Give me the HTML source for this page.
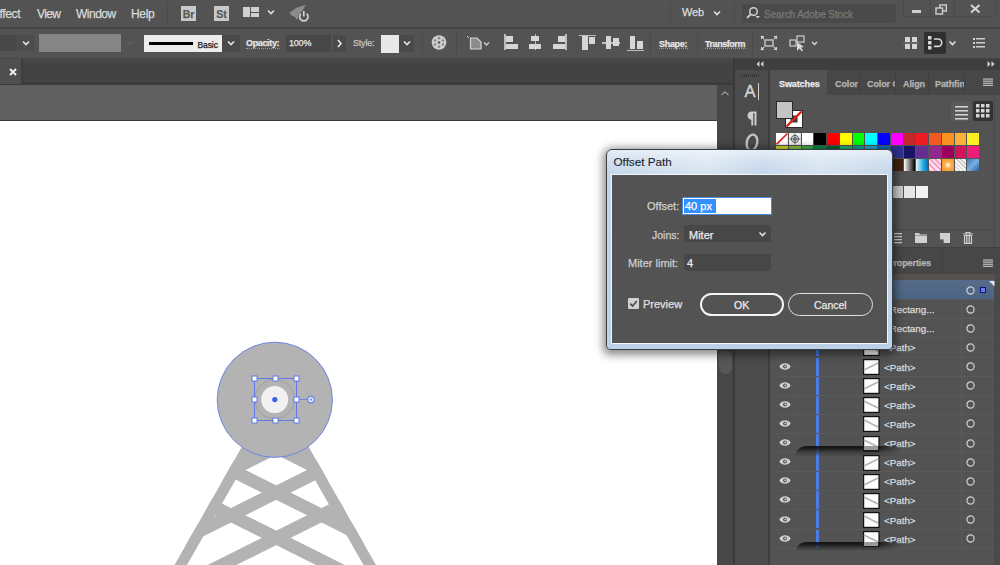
<!DOCTYPE html>
<html><head><meta charset="utf-8">
<style>
*{box-sizing:border-box;margin:0;padding:0}
html,body{width:1000px;height:565px;overflow:hidden;background:#535353;font-family:"Liberation Sans",sans-serif;color:#d6d6d6}
body{position:relative}
.a{position:absolute}
.t{position:absolute;white-space:nowrap;font-size:12px;line-height:14px;-webkit-text-stroke:0.25px currentColor}
svg{position:absolute;overflow:visible}
</style></head><body>
<!-- MENU BAR -->
<div class="a" style="left:0;top:0;width:1000px;height:27px;background:#535353"></div>
<div class="a" style="left:0;top:27px;width:1000px;height:2px;background:#434343"></div>
<div class="t" style="left:-8px;top:7px;font-size:12px;letter-spacing:-0.4px;color:#dadada">Effect</div>
<div class="t" style="left:37px;top:7px;font-size:12px;letter-spacing:-0.6px;color:#dadada">View</div>
<div class="t" style="left:76px;top:7px;font-size:12px;letter-spacing:-0.5px;color:#dadada">Window</div>
<div class="t" style="left:131px;top:7px;font-size:12px;letter-spacing:-0.3px;color:#dadada">Help</div>
<div class="a" style="left:167px;top:4px;width:1px;height:19px;background:#4a4a4a"></div>
<div class="a" style="left:181px;top:6px;width:15px;height:15px;background:#c9c9c9"></div>
<div class="t" style="left:182px;top:7px;width:13px;text-align:center;font-size:10.5px;font-weight:bold;color:#5a5a5a">Br</div>
<div class="a" style="left:214px;top:6px;width:15px;height:15px;background:#c9c9c9"></div>
<div class="t" style="left:215px;top:7px;width:13px;text-align:center;font-size:10.5px;font-weight:bold;color:#5a5a5a">St</div>
<div class="a" style="left:243px;top:7px;width:7px;height:10px;background:#d0d0d0"></div>
<div class="a" style="left:251px;top:7px;width:8px;height:4.5px;background:#d0d0d0"></div>
<div class="a" style="left:251px;top:12.5px;width:8px;height:4.5px;background:#d0d0d0"></div>
<svg style="left:267px;top:9px" width="8" height="6"><path d="M1 1.5 L4 4.5 L7 1.5" fill="none" stroke="#e0e0e0" stroke-width="1.6"/></svg>
<svg style="left:288px;top:2px" width="24" height="22"><path d="M1.5 10.5 L9 5.5 L17.5 3 L15 8 L11 13 L9 18 L7 15 L3 13 Z" fill="#8c8c8c"/><circle cx="15.8" cy="14.7" r="5.6" fill="#535353"/><path d="M13 11.6 A4.2 4.2 0 1 0 18.6 11.6" fill="none" stroke="#d0d0d0" stroke-width="1.7"/><path d="M15.8 9 V14.5" stroke="#d0d0d0" stroke-width="1.7"/></svg>
<!-- right of menu -->
<div class="a" style="left:670px;top:3px;width:1px;height:21px;background:#4a4a4a"></div>
<div class="t" style="left:682px;top:5px;font-size:11px;letter-spacing:-0.2px;color:#dcdcdc">Web</div>
<svg style="left:712.5px;top:10px" width="8" height="6"><path d="M1 1.5 L4 4.5 L7 1.5" fill="none" stroke="#e0e0e0" stroke-width="1.6"/></svg>
<div class="a" style="left:734px;top:3px;width:1px;height:21px;background:#4a4a4a"></div>
<div class="a" style="left:742px;top:4px;width:154px;height:19px;background:#4a4a4a;border-radius:2px"></div>
<svg style="left:745px;top:6px" width="16" height="14"><circle cx="8.5" cy="5.5" r="3.8" fill="none" stroke="#d0d0d0" stroke-width="1.5"/><path d="M5.8 8.2 L2 12" stroke="#d0d0d0" stroke-width="1.8"/><path d="M10.5 10 L15 10 L12.75 12.5Z" fill="#d0d0d0"/></svg>
<div class="t" style="left:764px;top:7.5px;font-size:10px;letter-spacing:-0.1px;color:#7a7a7a">Search Adobe Stock</div>
<div class="a" style="left:903px;top:-1px;width:93px;height:17.5px;border:1px solid #4b4b4b"></div>
<div class="a" style="left:929.5px;top:0;width:1px;height:16px;background:#4b4b4b"></div>
<div class="a" style="left:954px;top:0;width:1px;height:16px;background:#4b4b4b"></div>
<div class="a" style="left:912px;top:10px;width:9px;height:3px;background:#d0d0d0"></div>
<svg style="left:935px;top:4px" width="14" height="12"><rect x="4.8" y="1" width="6.5" height="6" fill="none" stroke="#d0d0d0" stroke-width="1.4"/><rect x="1" y="4" width="6.5" height="6" fill="#535353" stroke="#d0d0d0" stroke-width="1.4"/></svg>
<svg style="left:969px;top:3.5px" width="13" height="10"><path d="M2 1 L10.5 8.5 M10.5 1 L2 8.5" stroke="#d4d4d4" stroke-width="2"/></svg>
<!-- CONTROL BAR -->
<div class="a" style="left:0;top:29px;width:1000px;height:29px;background:#535353"></div>
<div class="a" style="left:0;top:35px;width:17px;height:16px;background:#474747"></div>
<div class="a" style="left:18px;top:35px;width:16px;height:16px;background:#4c4c4c"></div>
<svg style="left:22px;top:40px" width="8" height="6"><path d="M1 1.5 L4 4.5 L7 1.5" fill="none" stroke="#e6e6e6" stroke-width="1.6"/></svg>
<div class="a" style="left:39px;top:34px;width:82px;height:18px;background:#858585"></div>
<svg style="left:126px;top:40px" width="8" height="6"><path d="M1 1.5 L4 4.5 L7 1.5" fill="none" stroke="#666" stroke-width="1.4"/></svg>
<div class="a" style="left:144px;top:35px;width:78px;height:17px;background:#ececec"></div>
<div class="a" style="left:149px;top:42px;width:44px;height:2.5px;background:#000"></div>
<div class="t" style="left:197.5px;top:38px;font-size:8.5px;letter-spacing:-0.1px;color:#1a1a1a">Basic</div>
<div class="a" style="left:222px;top:35px;width:18px;height:17px;background:#4a4a4a"></div>
<svg style="left:227px;top:40px" width="8" height="6"><path d="M1 1.5 L4 4.5 L7 1.5" fill="none" stroke="#e6e6e6" stroke-width="1.6"/></svg>
<div class="t" style="left:246px;top:36px;font-size:9px;font-weight:bold;letter-spacing:-0.35px;color:#e4e4e4">Opacity:</div>
<div class="a" style="left:246px;top:47.5px;width:34px;height:1px;border-top:1px dotted #9a9a9a"></div>
<div class="a" style="left:286px;top:35px;width:45px;height:17px;background:#474747"></div>
<div class="t" style="left:289px;top:36px;font-size:9px;letter-spacing:-0.2px;color:#e6e6e6">100%</div>
<div class="a" style="left:333px;top:35px;width:13px;height:17px;background:#4a4a4a"></div>
<svg style="left:336px;top:39px" width="7" height="9"><path d="M2 1 L5 4.5 L2 8" fill="none" stroke="#e6e6e6" stroke-width="1.6"/></svg>
<div class="t" style="left:353px;top:36px;font-size:9px;letter-spacing:-0.2px;color:#c4c4c4">Style:</div>
<div class="a" style="left:381px;top:34.5px;width:18px;height:18px;background:#e8e8e8"></div>
<div class="a" style="left:399px;top:35px;width:15px;height:17px;background:#4a4a4a"></div>
<svg style="left:403px;top:40px" width="8" height="6"><path d="M1 1.5 L4 4.5 L7 1.5" fill="none" stroke="#e6e6e6" stroke-width="1.6"/></svg>
<div class="a" style="left:422px;top:31px;width:1px;height:24px;background:#4b4b4b"></div>
<svg style="left:430px;top:34px" width="18" height="18"><circle cx="9" cy="8.5" r="7.3" fill="#d0d0d0"/><circle cx="9" cy="8.5" r="1.3" fill="#555"/><g fill="#8a8a8a"><circle cx="9" cy="4.2" r="1.4"/><circle cx="9" cy="12.8" r="1.4"/><circle cx="5" cy="6.5" r="1.3"/><circle cx="13" cy="6.5" r="1.3"/><circle cx="5" cy="10.5" r="1.3"/><circle cx="13" cy="10.5" r="1.3"/></g></svg>
<div class="a" style="left:456px;top:31px;width:1px;height:24px;background:#4b4b4b"></div>
<svg style="left:466px;top:34px" width="24" height="18"><path d="M4.5 4 H11 L15 8 V15 H4.5 Z" fill="#8c8c8c" stroke="#d4d4d4" stroke-width="1.2"/><path d="M1 2 L3 4" stroke="#ccc" stroke-width="1"/><path d="M18 8.5 L20.5 11 L23 8.5" fill="none" stroke="#d0d0d0" stroke-width="1.4"/></svg>
<!-- align -->
<g></g>
<div class="a" style="left:504px;top:34px;width:1.5px;height:16px;background:#bdbdbd"></div>
<div class="a" style="left:506px;top:36px;width:7px;height:6px;background:#d6d6d6"></div>
<div class="a" style="left:506px;top:44px;width:12px;height:5px;background:#d6d6d6"></div>
<div class="a" style="left:534.5px;top:34px;width:1.5px;height:16px;background:#bdbdbd"></div>
<div class="a" style="left:531px;top:36px;width:8px;height:5px;background:#d6d6d6"></div>
<div class="a" style="left:529px;top:44px;width:12px;height:5px;background:#d6d6d6"></div>
<div class="a" style="left:565px;top:34px;width:1.5px;height:16px;background:#bdbdbd"></div>
<div class="a" style="left:558px;top:36px;width:7px;height:6px;background:#d6d6d6"></div>
<div class="a" style="left:553px;top:44px;width:12px;height:5px;background:#d6d6d6"></div>
<div class="a" style="left:579px;top:34.5px;width:17px;height:1.5px;background:#bdbdbd"></div>
<div class="a" style="left:582px;top:36px;width:6px;height:14px;background:#d6d6d6"></div>
<div class="a" style="left:589px;top:37px;width:6px;height:7px;background:#d6d6d6"></div>
<div class="a" style="left:602px;top:42px;width:18px;height:1.5px;background:#bdbdbd"></div>
<div class="a" style="left:606px;top:36px;width:5px;height:13px;background:#d6d6d6"></div>
<div class="a" style="left:613px;top:38px;width:6px;height:8px;background:#d6d6d6"></div>
<div class="a" style="left:627px;top:49.5px;width:17px;height:1.5px;background:#bdbdbd"></div>
<div class="a" style="left:630px;top:36px;width:5px;height:13px;background:#d6d6d6"></div>
<div class="a" style="left:637px;top:41px;width:6px;height:8px;background:#d6d6d6"></div>
<div class="a" style="left:650px;top:31px;width:1px;height:24px;background:#4b4b4b"></div>
<div class="t" style="left:659px;top:36.5px;font-size:9px;font-weight:bold;letter-spacing:-0.3px;color:#e6e6e6">Shape:</div>
<div class="a" style="left:659px;top:48px;width:29px;height:1px;border-top:1px dotted #9a9a9a"></div>
<div class="a" style="left:697px;top:31px;width:1px;height:24px;background:#4b4b4b"></div>
<div class="t" style="left:705px;top:36.5px;font-size:9px;font-weight:bold;letter-spacing:-0.45px;color:#e6e6e6">Transform</div>
<div class="a" style="left:705px;top:48px;width:41px;height:1px;border-top:1px dotted #9a9a9a"></div>
<div class="a" style="left:752px;top:31px;width:1px;height:24px;background:#4b4b4b"></div>
<svg style="left:760px;top:35px" width="18" height="16"><rect x="5" y="5" width="8" height="6" fill="none" stroke="#cfcfcf" stroke-width="1.3"/><path d="M1 1 L4 4 M17 1 L14 4 M1 15 L4 12 M17 15 L14 12" stroke="#cfcfcf" stroke-width="1.4"/><path d="M1 1h3v1h-2v2h-1z M17 1h-3v1h2v2h1z M1 15h3v-1h-2v-2h-1z M17 15h-3v-1h2v-2h1z" fill="#cfcfcf"/></svg>
<svg style="left:788px;top:34px" width="32" height="18"><rect x="9" y="2" width="7" height="6" fill="none" stroke="#cfcfcf" stroke-width="1.2"/><rect x="2" y="6" width="6" height="6" fill="none" stroke="#cfcfcf" stroke-width="1.2"/><path d="M9 8 L9 17 L11.5 14.5 L14 17.5 L15 16.5 L13 13.5 L16 13 Z" fill="#d8d8d8"/><path d="M24 8 L26.5 10.5 L29 8" fill="none" stroke="#d8d8d8" stroke-width="1.5"/></svg>
<svg style="left:903px;top:36px" width="16" height="14"><g fill="#d6d6d6"><rect x="2" y="1" width="5" height="5"/><rect x="9" y="1" width="5" height="5"/><rect x="2" y="8" width="5" height="5"/><rect x="9" y="8" width="5" height="5"/></g><path d="M0 7 H16" stroke="#888" stroke-width="0.8"/></svg>
<div class="a" style="left:924px;top:32px;width:22px;height:22px;background:#2f2f2f;border-radius:2px"></div>
<svg style="left:924px;top:32px" width="22" height="22"><g fill="#d8d8d8"><rect x="4" y="4" width="3.5" height="3.5"/><rect x="4" y="9" width="3.5" height="3.5"/><rect x="4" y="14" width="3.5" height="3.5"/></g><path d="M10 7 H14 A3.7 3.7 0 0 1 14 14.4 H10" fill="none" stroke="#d8d8d8" stroke-width="1.6"/></svg>
<svg style="left:948px;top:40px" width="10" height="7"><path d="M1.5 1.5 L4.5 4.5 L7.5 1.5" fill="none" stroke="#e0e0e0" stroke-width="1.6"/></svg>
<svg style="left:972px;top:37px" width="14" height="12"><g fill="#d0d0d0"><rect x="1" y="1" width="2" height="2"/><rect x="1" y="5" width="2" height="2"/><rect x="1" y="9" width="2" height="2"/><rect x="4" y="1" width="9" height="1.5"/><rect x="4" y="5" width="9" height="1.5"/><rect x="4" y="9" width="9" height="1.5"/></g></svg>
<div class="a" style="left:0;top:57.5px;width:1000px;height:1.5px;background:#454545"></div>
<!-- TAB BAR -->
<div class="a" style="left:0;top:59px;width:735px;height:26px;background:linear-gradient(180deg,#4a4a4a 0,#474747 3px,#434343 5px,#434343 23px,#3b3b3b 24px,#3b3b3b 26px)"></div>
<div class="a" style="left:0;top:59px;width:21px;height:25px;background:#4f4f4f"></div>
<svg style="left:8.5px;top:67.5px" width="8" height="8"><path d="M1 1 L7 7 M7 1 L1 7" stroke="#f0f0f0" stroke-width="1.9"/></svg>
<div class="a" style="left:21px;top:59px;width:2px;height:26px;background:#3d3d3d"></div>

<!-- CANVAS -->
<div class="a" style="left:0;top:85px;width:717px;height:35px;background:#606060"></div>
<div class="a" style="left:0;top:120px;width:717px;height:1px;background:#3a3a3a"></div>
<div class="a" style="left:0;top:121px;width:717px;height:444px;background:#ffffff"></div>
<!-- scrollbar -->
<div class="a" style="left:717px;top:85px;width:16px;height:480px;background:#474747"></div>
<div class="a" style="left:733px;top:58px;width:2px;height:507px;background:#3a3a3a"></div>
<svg style="left:720px;top:90px" width="10" height="7"><path d="M1.5 5 L5 1.8 L8.5 5" fill="none" stroke="#9a9a9a" stroke-width="1.3"/></svg>
<div class="a" style="left:719px;top:351px;width:13px;height:23px;background:#575757;border-radius:6px"></div>

<!-- TOWER -->
<svg style="left:0;top:0" width="1000" height="565">
<defs><clipPath id="tc"><rect x="0" y="121" width="717" height="444"/></clipPath>
<clipPath id="lg"><polygon points="271.4,395 279.1,395 376,565 174.5,565"/></clipPath></defs>
<g clip-path="url(#tc)" fill="#b3b3b3">
<polygon points="271.4,395 283.9,395 187,565 174.5,565"/>
<polygon points="266.6,395 279.1,395 376,565 363.5,565"/>
<g clip-path="url(#lg)">
<polygon points="150,377.1 400,502.1 400,516.5 150,391.5"/>
<polygon points="150,503.3 400,378.3 400,392.7 150,517.7"/>
<polygon points="150,422.3 400,547.3 400,561.7 150,436.7"/>
<polygon points="150,548.5 400,423.5 400,437.9 150,562.9"/>
<polygon points="150,467.6 400,592.6 400,607.0 150,482.0"/>
<polygon points="150,593.8 400,468.8 400,483.2 150,608.2"/>
</g>
<circle cx="274.8" cy="399.8" r="57.6" fill="#b3b3b3" stroke="#6f86e8" stroke-width="1"/>
</g>
</svg>
<svg style="left:0;top:0" width="1000" height="565">
<circle cx="274.7" cy="399.2" r="19.7" fill="none" stroke="#9c9ca6" stroke-width="1"/>
<circle cx="274.7" cy="399.6" r="13.5" fill="#f1f1f1"/>
<circle cx="274.8" cy="399.6" r="2.6" fill="#3b5fe0"/>
<rect x="254.5" y="378.5" width="42" height="42" fill="none" stroke="#5f7be8" stroke-width="1"/>
<path d="M297 399.5 H307.5" stroke="#6f86e8" stroke-width="1"/>
<circle cx="310.9" cy="399.6" r="3.3" fill="#e8ecff" stroke="#6a84e8" stroke-width="1.3"/><circle cx="310.9" cy="399.6" r="1.1" fill="#6a84e8"/>
<g fill="#ffffff" stroke="#5f7be8" stroke-width="1">
<rect x="252" y="376" width="5" height="5"/><rect x="273" y="376" width="5" height="5"/><rect x="294" y="376" width="5" height="5"/>
<rect x="252" y="397" width="5" height="5"/><rect x="294" y="397" width="5" height="5"/>
<rect x="252" y="418" width="5" height="5"/><rect x="273" y="418" width="5" height="5"/><rect x="294" y="418" width="5" height="5"/>
</g>
</svg>
<!-- RIGHT DOCK -->
<div class="a" style="left:735px;top:59px;width:265px;height:11px;background:#3e3e3e"></div>
<svg style="left:755px;top:60px" width="10" height="8"><path d="M4.5 1 L1.5 4 L4.5 7 Z M8.5 1 L5.5 4 L8.5 7 Z" fill="#cfcfcf"/></svg>
<svg style="left:986px;top:60px" width="10" height="8"><path d="M1.5 1 L4.5 4 L1.5 7 Z M5.5 1 L8.5 4 L5.5 7 Z" fill="#cfcfcf"/></svg>
<!-- tools column -->
<div class="a" style="left:735px;top:70px;width:33px;height:495px;background:#4b4b4b"></div>
<div class="a" style="left:742px;top:74px;width:18px;height:2.5px;background:repeating-linear-gradient(90deg,#363636 0 1px,#4b4b4b 1px 2px)"></div>
<div class="t" style="left:744.5px;top:82px;font-size:16.5px;line-height:18px;color:#d6d6d6;-webkit-text-stroke:0.4px #d6d6d6">A</div>
<div class="a" style="left:758px;top:83px;width:1.2px;height:17px;background:#d2d2d2"></div>
<svg style="left:745px;top:110px" width="13" height="16"><path d="M6 1.5 H11.5 V15.5 H9.5 V3.3 H8.2 V15.5 H6.3 V9.8 A4.2 4.2 0 0 1 6 1.5Z" fill="#cdcdcd"/></svg>
<svg style="left:743px;top:133px" width="18" height="20"><ellipse cx="9" cy="9.5" rx="5.2" ry="8" transform="rotate(12 9 9.5)" fill="none" stroke="#c4c4c4" stroke-width="2.4"/></svg>
<div class="a" style="left:768px;top:70px;width:2px;height:495px;background:#3f3f3f"></div>
<!-- swatches panel -->
<div class="a" style="left:770px;top:70px;width:230px;height:177px;background:#535353"></div>
<div class="a" style="left:827px;top:70px;width:173px;height:25px;background:#474747"></div>
<div class="t" style="left:779px;top:76.5px;font-size:9px;font-weight:bold;letter-spacing:-0.1px;color:#ececec">Swatches</div>
<div class="t" style="left:835px;top:76.5px;font-size:9px;font-weight:bold;letter-spacing:-0.1px;color:#b4b4b4">Color</div>
<div class="a" style="left:859px;top:72px;width:1px;height:21px;background:#3f3f3f"></div>
<div class="t" style="left:867px;top:76.5px;width:28px;overflow:hidden;font-size:9px;font-weight:bold;letter-spacing:-0.1px;color:#b4b4b4">Color Guide</div>
<div class="a" style="left:895px;top:72px;width:1px;height:21px;background:#3f3f3f"></div>
<div class="t" style="left:903px;top:76.5px;font-size:9px;font-weight:bold;letter-spacing:-0.1px;color:#b4b4b4">Align</div>
<div class="a" style="left:928px;top:72px;width:1px;height:21px;background:#3f3f3f"></div>
<div class="t" style="left:935px;top:76.5px;width:29px;overflow:hidden;font-size:9px;font-weight:bold;letter-spacing:-0.1px;color:#b4b4b4">Pathfinder</div>
<div class="a" style="left:964px;top:72px;width:1px;height:21px;background:#3f3f3f"></div>
<svg style="left:983px;top:78px" width="12" height="10"><g fill="#c8c8c8"><rect x="0" y="0.5" width="10" height="1.1"/><rect x="0" y="2.6" width="10" height="1.1"/><rect x="0" y="4.7" width="10" height="1.1"/><rect x="0" y="6.8" width="10" height="1.1"/></g></svg>
<!-- fill/stroke -->
<div class="a" style="left:785px;top:109.5px;width:18px;height:18px;background:#fff;border:1px solid #2a2a2a"></div>
<svg style="left:786px;top:110.5px" width="16" height="16"><rect x="4.5" y="4.5" width="7" height="7" fill="#3a3a3a"/><path d="M0.5 15.5 L15.5 0.5" stroke="#e0201c" stroke-width="2.4"/></svg>
<div class="a" style="left:776px;top:101px;width:17px;height:18px;background:#c4c4c4;border:1px solid #2a2a2a"></div>
<!-- view buttons -->
<div class="a" style="left:951px;top:101px;width:20px;height:20px;background:#5a5a5a;border-radius:3px"></div>
<svg style="left:955px;top:105px" width="14" height="16"><g fill="#d0d0d0"><rect x="0" y="1" width="13" height="1.6"/><rect x="0" y="5" width="13" height="1.6"/><rect x="0" y="9" width="13" height="1.6"/><rect x="0" y="13" width="13" height="1.6"/></g></svg>
<div class="a" style="left:973px;top:101px;width:20px;height:20px;background:#333;border-radius:2px"></div>
<svg style="left:976px;top:104px" width="14" height="14"><g fill="#d4d4d4"><rect x="0" y="0" width="3.5" height="3.5"/><rect x="5" y="0" width="3.5" height="3.5"/><rect x="10" y="0" width="3.5" height="3.5"/><rect x="0" y="5" width="3.5" height="3.5"/><rect x="5" y="5" width="3.5" height="3.5"/><rect x="10" y="5" width="3.5" height="3.5"/><rect x="0" y="10" width="3.5" height="3.5"/><rect x="5" y="10" width="3.5" height="3.5"/><rect x="10" y="10" width="3.5" height="3.5"/></g></svg>
<svg style="left:776.00px;top:133.3px" width="11.9" height="11.9"><rect width="11.9" height="11.9" fill="#fff"/><path d="M0.5 11.4 L11.4 0.5" stroke="#e01b1b" stroke-width="1.6"/></svg>
<svg style="left:788.75px;top:133.3px" width="11.9" height="11.9"><rect width="11.9" height="11.9" fill="#f0f0f0"/><circle cx="5.95" cy="5.95" r="3.6" fill="none" stroke="#444" stroke-width="0.9"/><circle cx="5.95" cy="5.95" r="1.6" fill="none" stroke="#444" stroke-width="0.7"/><path d="M5.95 0.5 V11.4 M0.5 5.95 H11.4" stroke="#444" stroke-width="0.8"/></svg>
<div class="a" style="left:801.50px;top:133.3px;width:11.9px;height:11.9px;background:#ffffff"></div>
<div class="a" style="left:814.25px;top:133.3px;width:11.9px;height:11.9px;background:#000000"></div>
<div class="a" style="left:827.00px;top:133.3px;width:11.9px;height:11.9px;background:#ff0000"></div>
<div class="a" style="left:839.75px;top:133.3px;width:11.9px;height:11.9px;background:#ffff00"></div>
<div class="a" style="left:852.50px;top:133.3px;width:11.9px;height:11.9px;background:#00ff00"></div>
<div class="a" style="left:865.25px;top:133.3px;width:11.9px;height:11.9px;background:#00ffff"></div>
<div class="a" style="left:878.00px;top:133.3px;width:11.9px;height:11.9px;background:#0000ff"></div>
<div class="a" style="left:890.75px;top:133.3px;width:11.9px;height:11.9px;background:#ff00ff"></div>
<div class="a" style="left:903.50px;top:133.3px;width:11.9px;height:11.9px;background:#c1272d"></div>
<div class="a" style="left:916.25px;top:133.3px;width:11.9px;height:11.9px;background:#ed1c24"></div>
<div class="a" style="left:929.00px;top:133.3px;width:11.9px;height:11.9px;background:#f15a24"></div>
<div class="a" style="left:941.75px;top:133.3px;width:11.9px;height:11.9px;background:#f7931e"></div>
<div class="a" style="left:954.50px;top:133.3px;width:11.9px;height:11.9px;background:#fbb03b"></div>
<div class="a" style="left:967.25px;top:133.3px;width:11.9px;height:11.9px;background:#fcee21"></div>
<div class="a" style="left:776.00px;top:146.0px;width:11.9px;height:11.9px;background:#d9e021"></div>
<div class="a" style="left:788.75px;top:146.0px;width:11.9px;height:11.9px;background:#8cc63f"></div>
<div class="a" style="left:801.50px;top:146.0px;width:11.9px;height:11.9px;background:#39b54a"></div>
<div class="a" style="left:814.25px;top:146.0px;width:11.9px;height:11.9px;background:#009245"></div>
<div class="a" style="left:827.00px;top:146.0px;width:11.9px;height:11.9px;background:#006837"></div>
<div class="a" style="left:839.75px;top:146.0px;width:11.9px;height:11.9px;background:#22b573"></div>
<div class="a" style="left:852.50px;top:146.0px;width:11.9px;height:11.9px;background:#00a99d"></div>
<div class="a" style="left:865.25px;top:146.0px;width:11.9px;height:11.9px;background:#29abe2"></div>
<div class="a" style="left:878.00px;top:146.0px;width:11.9px;height:11.9px;background:#0071bc"></div>
<div class="a" style="left:890.75px;top:146.0px;width:11.9px;height:11.9px;background:#2e3192"></div>
<div class="a" style="left:903.50px;top:146.0px;width:11.9px;height:11.9px;background:#1b1464"></div>
<div class="a" style="left:916.25px;top:146.0px;width:11.9px;height:11.9px;background:#662d91"></div>
<div class="a" style="left:929.00px;top:146.0px;width:11.9px;height:11.9px;background:#93278f"></div>
<div class="a" style="left:941.75px;top:146.0px;width:11.9px;height:11.9px;background:#9e005d"></div>
<div class="a" style="left:954.50px;top:146.0px;width:11.9px;height:11.9px;background:#d4145a"></div>
<div class="a" style="left:967.25px;top:146.0px;width:11.9px;height:11.9px;background:#ed1e79"></div>
<div class="a" style="left:776.00px;top:158.7px;width:11.9px;height:11.9px;background:#c7b299"></div>
<div class="a" style="left:788.75px;top:158.7px;width:11.9px;height:11.9px;background:#998675"></div>
<div class="a" style="left:801.50px;top:158.7px;width:11.9px;height:11.9px;background:#736357"></div>
<div class="a" style="left:814.25px;top:158.7px;width:11.9px;height:11.9px;background:#534741"></div>
<div class="a" style="left:827.00px;top:158.7px;width:11.9px;height:11.9px;background:#c69c6d"></div>
<div class="a" style="left:839.75px;top:158.7px;width:11.9px;height:11.9px;background:#a67c52"></div>
<div class="a" style="left:852.50px;top:158.7px;width:11.9px;height:11.9px;background:#8c6239"></div>
<div class="a" style="left:865.25px;top:158.7px;width:11.9px;height:11.9px;background:#754c24"></div>
<div class="a" style="left:878.00px;top:158.7px;width:11.9px;height:11.9px;background:#603813"></div>
<div class="a" style="left:890.75px;top:158.7px;width:11.9px;height:11.9px;background:#42210b"></div>
<div class="a" style="left:903.50px;top:158.7px;width:11.9px;height:11.9px;background:linear-gradient(90deg,#fff,#000)"></div>
<div class="a" style="left:916.25px;top:158.7px;width:11.9px;height:11.9px;background:linear-gradient(90deg,#e8f4fb,#29abe2 60%,#0071bc)"></div>
<div class="a" style="left:929.00px;top:158.7px;width:11.9px;height:11.9px;background:repeating-linear-gradient(45deg,#f5a3c7 0 2px,#fbe3ee 2px 4px)"></div>
<div class="a" style="left:941.75px;top:158.7px;width:11.9px;height:11.9px;background:radial-gradient(circle,#fff 0,#f9b04a 40%,#f7931e 100%)"></div>
<div class="a" style="left:954.50px;top:158.7px;width:11.9px;height:11.9px;background:repeating-linear-gradient(45deg,#c8c8c8 0 1px,#f4f4f4 1px 3px)"></div>
<div class="a" style="left:967.25px;top:158.7px;width:11.9px;height:11.9px;background:linear-gradient(135deg,#3a78c0,#7ab0e0 50%,#2a5a98)"></div>
<svg style="left:776.0px;top:186px" width="12" height="12"><path d="M1 2 H5 L6 3.5 H11 V10 H1Z" fill="#c8c8c8"/></svg>
<div class="a" style="left:788.75px;top:186.0px;width:11.9px;height:11.9px;background:#000000"></div>
<div class="a" style="left:801.50px;top:186.0px;width:11.9px;height:11.9px;background:#1a1a1a"></div>
<div class="a" style="left:814.25px;top:186.0px;width:11.9px;height:11.9px;background:#333333"></div>
<div class="a" style="left:827.00px;top:186.0px;width:11.9px;height:11.9px;background:#4d4d4d"></div>
<div class="a" style="left:839.75px;top:186.0px;width:11.9px;height:11.9px;background:#666666"></div>
<div class="a" style="left:852.50px;top:186.0px;width:11.9px;height:11.9px;background:#808080"></div>
<div class="a" style="left:865.25px;top:186.0px;width:11.9px;height:11.9px;background:#999999"></div>
<div class="a" style="left:878.00px;top:186.0px;width:11.9px;height:11.9px;background:#b3b3b3"></div>
<div class="a" style="left:890.75px;top:186.0px;width:11.9px;height:11.9px;background:#cccccc"></div>
<div class="a" style="left:903.50px;top:186.0px;width:11.9px;height:11.9px;background:#e6e6e6"></div>
<div class="a" style="left:916.25px;top:186.0px;width:11.9px;height:11.9px;background:#f2f2f2"></div>
<div class="a" style="left:776px;top:229px;width:218px;height:1px;background:#494949"></div>
<div class="a" style="left:994px;top:95px;width:1px;height:152px;background:#4b4b4b"></div>
<svg style="left:890px;top:232px" width="14" height="12"><g fill="#c6c6c6"><rect x="0" y="0" width="3" height="11"/><rect x="4" y="1" width="8" height="1.3"/><rect x="4" y="4" width="8" height="1.3"/><rect x="4" y="7" width="8" height="1.3"/><rect x="4" y="10" width="8" height="1.3"/></g></svg>
<svg style="left:914px;top:232px" width="14" height="12"><path d="M1 1 H5 L6 2.5 H13 V11 H1 Z" fill="#d0d0d0"/><path d="M1 3.5 H13" stroke="#8a8a8a" stroke-width="0.8"/></svg>
<svg style="left:939px;top:232px" width="12" height="12"><rect x="1" y="1" width="10" height="10" fill="#d0d0d0"/><path d="M1 7 H5 V11 H1Z" fill="#535353"/><path d="M1 7 H5 V11" fill="none" stroke="#d0d0d0" stroke-width="0.8"/></svg>
<svg style="left:962px;top:231px" width="12" height="14"><path d="M1 3 H11 M4 3 V1.5 H8 V3" fill="none" stroke="#cfcfcf" stroke-width="1.2"/><path d="M2.5 4.5 H9.5 V12.5 H2.5 Z" fill="none" stroke="#cfcfcf" stroke-width="1.2"/><path d="M4.5 5 V12 M6 5 V12 M7.5 5 V12" stroke="#cfcfcf" stroke-width="0.9"/></svg>
<!-- layers panel -->
<div class="a" style="left:770px;top:247px;width:230px;height:318px;background:#535353"></div>
<div class="a" style="left:770px;top:247px;width:230px;height:1px;background:#404040"></div>
<div class="a" style="left:770px;top:248px;width:230px;height:26px;background:#474747"></div>
<div class="t" style="left:887.5px;top:256.3px;font-size:9px;font-weight:bold;letter-spacing:-0.1px;color:#b4b4b4">Properties</div>
<div class="a" style="left:942px;top:250px;width:1px;height:22px;background:#3f3f3f"></div>
<svg style="left:983px;top:259px" width="12" height="10"><g fill="#c8c8c8"><rect x="0" y="0.5" width="10" height="1.1"/><rect x="0" y="2.6" width="10" height="1.1"/><rect x="0" y="4.7" width="10" height="1.1"/><rect x="0" y="6.8" width="10" height="1.1"/></g></svg>
<div class="a" style="left:770px;top:274px;width:224px;height:6px;background:#57524e"></div>
<div class="a" style="left:994px;top:274px;width:6px;height:291px;background:#4a4a4a"></div>
<div class="a" style="left:770px;top:280px;width:224px;height:19.3px;background:linear-gradient(180deg,#566b88,#4b6584)"></div>
<svg style="left:988.5px;top:280.5px" width="5.5" height="5.5"><path d="M0 0 H5.5 V5.5 Z" fill="#e6e6e6"/></svg>
<div class="a" style="left:979.5px;top:287.0px;width:6px;height:6px;background:#6b7cf0;border:1px solid #15157a"></div>
<div class="a" style="left:796.5px;top:299.6px;width:1px;height:270px;background:#575757"></div>
<div class="a" style="left:961px;top:299.6px;width:1px;height:270px;background:#5a5a5a"></div>
<svg style="left:966px;top:285.6px" width="9" height="9"><circle cx="4.5" cy="4.5" r="3.6" fill="none" stroke="#d2d2d2" stroke-width="1.2"/></svg>
<div class="a" style="left:776px;top:299.1px;width:218px;height:1px;background:#5a5a5a"></div>
<svg style="left:966px;top:304.7px" width="9" height="9"><circle cx="4.5" cy="4.5" r="3.6" fill="none" stroke="#d2d2d2" stroke-width="1.2"/></svg>
<div class="a" style="left:776px;top:318.2px;width:218px;height:1px;background:#5a5a5a"></div>
<div class="t" style="left:884px;top:303.2px;font-size:9.8px;letter-spacing:0px;color:#dcdcdc">&lt;Rectang...</div>
<svg style="left:966px;top:323.8px" width="9" height="9"><circle cx="4.5" cy="4.5" r="3.6" fill="none" stroke="#d2d2d2" stroke-width="1.2"/></svg>
<div class="a" style="left:776px;top:337.4px;width:218px;height:1px;background:#5a5a5a"></div>
<div class="t" style="left:884px;top:322.3px;font-size:9.8px;letter-spacing:0px;color:#dcdcdc">&lt;Rectang...</div>
<svg style="left:966px;top:342.9px" width="9" height="9"><circle cx="4.5" cy="4.5" r="3.6" fill="none" stroke="#d2d2d2" stroke-width="1.2"/></svg>
<div class="a" style="left:776px;top:356.5px;width:218px;height:1px;background:#5a5a5a"></div>
<div class="t" style="left:884px;top:341.4px;font-size:9.8px;letter-spacing:0px;color:#dcdcdc">&lt;Path&gt;</div>
<svg style="left:778.8px;top:342.4px" width="13" height="9"><path d="M0.3 4.5 C2.8 0.2, 9.2 0.2, 11.7 4.5 C9.2 8.8, 2.8 8.8, 0.3 4.5Z" fill="#d2d2d2"/><circle cx="6" cy="4.5" r="2.1" fill="#5e5e5e"/><circle cx="6.4" cy="4.3" r="0.9" fill="#d8d8d8"/></svg>
<div class="a" style="left:815.5px;top:338.4px;width:3px;height:18.1px;background:#4a7de6"></div>
<svg style="left:863px;top:339.9px" width="17" height="16"><rect x="0.6" y="0.6" width="15.4" height="14.8" fill="#fdfdfd" stroke="#111" stroke-width="1.2"/><path d="M1 4 L15 11" stroke="#b4b4b4" stroke-width="1.8"/></svg>
<svg style="left:966px;top:362.0px" width="9" height="9"><circle cx="4.5" cy="4.5" r="3.6" fill="none" stroke="#d2d2d2" stroke-width="1.2"/></svg>
<div class="a" style="left:776px;top:375.6px;width:218px;height:1px;background:#5a5a5a"></div>
<div class="t" style="left:884px;top:360.5px;font-size:9.8px;letter-spacing:0px;color:#dcdcdc">&lt;Path&gt;</div>
<svg style="left:778.8px;top:361.5px" width="13" height="9"><path d="M0.3 4.5 C2.8 0.2, 9.2 0.2, 11.7 4.5 C9.2 8.8, 2.8 8.8, 0.3 4.5Z" fill="#d2d2d2"/><circle cx="6" cy="4.5" r="2.1" fill="#5e5e5e"/><circle cx="6.4" cy="4.3" r="0.9" fill="#d8d8d8"/></svg>
<div class="a" style="left:815.5px;top:357.5px;width:3px;height:18.1px;background:#4a7de6"></div>
<svg style="left:863px;top:359.0px" width="17" height="16"><rect x="0.6" y="0.6" width="15.4" height="14.8" fill="#fdfdfd" stroke="#111" stroke-width="1.2"/><path d="M1 11 L15 4" stroke="#b4b4b4" stroke-width="1.8"/></svg>
<svg style="left:966px;top:381.2px" width="9" height="9"><circle cx="4.5" cy="4.5" r="3.6" fill="none" stroke="#d2d2d2" stroke-width="1.2"/></svg>
<div class="a" style="left:776px;top:394.7px;width:218px;height:1px;background:#5a5a5a"></div>
<div class="t" style="left:884px;top:379.7px;font-size:9.8px;letter-spacing:0px;color:#dcdcdc">&lt;Path&gt;</div>
<svg style="left:778.8px;top:380.7px" width="13" height="9"><path d="M0.3 4.5 C2.8 0.2, 9.2 0.2, 11.7 4.5 C9.2 8.8, 2.8 8.8, 0.3 4.5Z" fill="#d2d2d2"/><circle cx="6" cy="4.5" r="2.1" fill="#5e5e5e"/><circle cx="6.4" cy="4.3" r="0.9" fill="#d8d8d8"/></svg>
<div class="a" style="left:815.5px;top:376.6px;width:3px;height:18.1px;background:#4a7de6"></div>
<svg style="left:863px;top:378.1px" width="17" height="16"><rect x="0.6" y="0.6" width="15.4" height="14.8" fill="#fdfdfd" stroke="#111" stroke-width="1.2"/><path d="M1 11 L15 4" stroke="#b4b4b4" stroke-width="1.8"/></svg>
<svg style="left:966px;top:400.3px" width="9" height="9"><circle cx="4.5" cy="4.5" r="3.6" fill="none" stroke="#d2d2d2" stroke-width="1.2"/></svg>
<div class="a" style="left:776px;top:413.8px;width:218px;height:1px;background:#5a5a5a"></div>
<div class="t" style="left:884px;top:398.8px;font-size:9.8px;letter-spacing:0px;color:#dcdcdc">&lt;Path&gt;</div>
<svg style="left:778.8px;top:399.8px" width="13" height="9"><path d="M0.3 4.5 C2.8 0.2, 9.2 0.2, 11.7 4.5 C9.2 8.8, 2.8 8.8, 0.3 4.5Z" fill="#d2d2d2"/><circle cx="6" cy="4.5" r="2.1" fill="#5e5e5e"/><circle cx="6.4" cy="4.3" r="0.9" fill="#d8d8d8"/></svg>
<div class="a" style="left:815.5px;top:395.7px;width:3px;height:18.1px;background:#4a7de6"></div>
<svg style="left:863px;top:397.2px" width="17" height="16"><rect x="0.6" y="0.6" width="15.4" height="14.8" fill="#fdfdfd" stroke="#111" stroke-width="1.2"/><path d="M1 4 L15 11" stroke="#b4b4b4" stroke-width="1.8"/></svg>
<svg style="left:966px;top:419.4px" width="9" height="9"><circle cx="4.5" cy="4.5" r="3.6" fill="none" stroke="#d2d2d2" stroke-width="1.2"/></svg>
<div class="a" style="left:776px;top:433.0px;width:218px;height:1px;background:#5a5a5a"></div>
<div class="t" style="left:884px;top:417.9px;font-size:9.8px;letter-spacing:0px;color:#dcdcdc">&lt;Path&gt;</div>
<svg style="left:778.8px;top:418.9px" width="13" height="9"><path d="M0.3 4.5 C2.8 0.2, 9.2 0.2, 11.7 4.5 C9.2 8.8, 2.8 8.8, 0.3 4.5Z" fill="#d2d2d2"/><circle cx="6" cy="4.5" r="2.1" fill="#5e5e5e"/><circle cx="6.4" cy="4.3" r="0.9" fill="#d8d8d8"/></svg>
<div class="a" style="left:815.5px;top:414.8px;width:3px;height:18.1px;background:#4a7de6"></div>
<svg style="left:863px;top:416.3px" width="17" height="16"><rect x="0.6" y="0.6" width="15.4" height="14.8" fill="#fdfdfd" stroke="#111" stroke-width="1.2"/><path d="M1 4 L15 11" stroke="#b4b4b4" stroke-width="1.8"/></svg>
<svg style="left:966px;top:438.5px" width="9" height="9"><circle cx="4.5" cy="4.5" r="3.6" fill="none" stroke="#d2d2d2" stroke-width="1.2"/></svg>
<div class="a" style="left:776px;top:452.1px;width:218px;height:1px;background:#5a5a5a"></div>
<div class="t" style="left:884px;top:437.0px;font-size:9.8px;letter-spacing:0px;color:#dcdcdc">&lt;Path&gt;</div>
<svg style="left:778.8px;top:438.0px" width="13" height="9"><path d="M0.3 4.5 C2.8 0.2, 9.2 0.2, 11.7 4.5 C9.2 8.8, 2.8 8.8, 0.3 4.5Z" fill="#d2d2d2"/><circle cx="6" cy="4.5" r="2.1" fill="#5e5e5e"/><circle cx="6.4" cy="4.3" r="0.9" fill="#d8d8d8"/></svg>
<div class="a" style="left:815.5px;top:434.0px;width:3px;height:18.1px;background:#4a7de6"></div>
<svg style="left:863px;top:435.5px" width="17" height="16"><rect x="0.6" y="0.6" width="15.4" height="14.8" fill="#fdfdfd" stroke="#111" stroke-width="1.2"/><path d="M1 4 L15 11" stroke="#b4b4b4" stroke-width="1.8"/></svg>
<svg style="left:966px;top:457.6px" width="9" height="9"><circle cx="4.5" cy="4.5" r="3.6" fill="none" stroke="#d2d2d2" stroke-width="1.2"/></svg>
<div class="a" style="left:776px;top:471.2px;width:218px;height:1px;background:#5a5a5a"></div>
<div class="t" style="left:884px;top:456.1px;font-size:9.8px;letter-spacing:0px;color:#dcdcdc">&lt;Path&gt;</div>
<svg style="left:778.8px;top:457.1px" width="13" height="9"><path d="M0.3 4.5 C2.8 0.2, 9.2 0.2, 11.7 4.5 C9.2 8.8, 2.8 8.8, 0.3 4.5Z" fill="#d2d2d2"/><circle cx="6" cy="4.5" r="2.1" fill="#5e5e5e"/><circle cx="6.4" cy="4.3" r="0.9" fill="#d8d8d8"/></svg>
<div class="a" style="left:815.5px;top:453.1px;width:3px;height:18.1px;background:#4a7de6"></div>
<svg style="left:863px;top:454.6px" width="17" height="16"><rect x="0.6" y="0.6" width="15.4" height="14.8" fill="#fdfdfd" stroke="#111" stroke-width="1.2"/><path d="M1 11 L15 4" stroke="#b4b4b4" stroke-width="1.8"/></svg>
<svg style="left:966px;top:476.8px" width="9" height="9"><circle cx="4.5" cy="4.5" r="3.6" fill="none" stroke="#d2d2d2" stroke-width="1.2"/></svg>
<div class="a" style="left:776px;top:490.3px;width:218px;height:1px;background:#5a5a5a"></div>
<div class="t" style="left:884px;top:475.3px;font-size:9.8px;letter-spacing:0px;color:#dcdcdc">&lt;Path&gt;</div>
<svg style="left:778.8px;top:476.3px" width="13" height="9"><path d="M0.3 4.5 C2.8 0.2, 9.2 0.2, 11.7 4.5 C9.2 8.8, 2.8 8.8, 0.3 4.5Z" fill="#d2d2d2"/><circle cx="6" cy="4.5" r="2.1" fill="#5e5e5e"/><circle cx="6.4" cy="4.3" r="0.9" fill="#d8d8d8"/></svg>
<div class="a" style="left:815.5px;top:472.2px;width:3px;height:18.1px;background:#4a7de6"></div>
<svg style="left:863px;top:473.7px" width="17" height="16"><rect x="0.6" y="0.6" width="15.4" height="14.8" fill="#fdfdfd" stroke="#111" stroke-width="1.2"/><path d="M1 11 L15 4" stroke="#b4b4b4" stroke-width="1.8"/></svg>
<svg style="left:966px;top:495.9px" width="9" height="9"><circle cx="4.5" cy="4.5" r="3.6" fill="none" stroke="#d2d2d2" stroke-width="1.2"/></svg>
<div class="a" style="left:776px;top:509.4px;width:218px;height:1px;background:#5a5a5a"></div>
<div class="t" style="left:884px;top:494.4px;font-size:9.8px;letter-spacing:0px;color:#dcdcdc">&lt;Path&gt;</div>
<svg style="left:778.8px;top:495.4px" width="13" height="9"><path d="M0.3 4.5 C2.8 0.2, 9.2 0.2, 11.7 4.5 C9.2 8.8, 2.8 8.8, 0.3 4.5Z" fill="#d2d2d2"/><circle cx="6" cy="4.5" r="2.1" fill="#5e5e5e"/><circle cx="6.4" cy="4.3" r="0.9" fill="#d8d8d8"/></svg>
<div class="a" style="left:815.5px;top:491.3px;width:3px;height:18.1px;background:#4a7de6"></div>
<svg style="left:863px;top:492.8px" width="17" height="16"><rect x="0.6" y="0.6" width="15.4" height="14.8" fill="#fdfdfd" stroke="#111" stroke-width="1.2"/><path d="M1 4 L15 11" stroke="#b4b4b4" stroke-width="1.8"/></svg>
<svg style="left:966px;top:515.0px" width="9" height="9"><circle cx="4.5" cy="4.5" r="3.6" fill="none" stroke="#d2d2d2" stroke-width="1.2"/></svg>
<div class="a" style="left:776px;top:528.6px;width:218px;height:1px;background:#5a5a5a"></div>
<div class="t" style="left:884px;top:513.5px;font-size:9.8px;letter-spacing:0px;color:#dcdcdc">&lt;Path&gt;</div>
<svg style="left:778.8px;top:514.5px" width="13" height="9"><path d="M0.3 4.5 C2.8 0.2, 9.2 0.2, 11.7 4.5 C9.2 8.8, 2.8 8.8, 0.3 4.5Z" fill="#d2d2d2"/><circle cx="6" cy="4.5" r="2.1" fill="#5e5e5e"/><circle cx="6.4" cy="4.3" r="0.9" fill="#d8d8d8"/></svg>
<div class="a" style="left:815.5px;top:510.4px;width:3px;height:18.1px;background:#4a7de6"></div>
<svg style="left:863px;top:511.9px" width="17" height="16"><rect x="0.6" y="0.6" width="15.4" height="14.8" fill="#fdfdfd" stroke="#111" stroke-width="1.2"/><path d="M1 4 L15 11" stroke="#b4b4b4" stroke-width="1.8"/></svg>
<svg style="left:966px;top:534.1px" width="9" height="9"><circle cx="4.5" cy="4.5" r="3.6" fill="none" stroke="#d2d2d2" stroke-width="1.2"/></svg>
<div class="a" style="left:776px;top:547.7px;width:218px;height:1px;background:#5a5a5a"></div>
<div class="t" style="left:884px;top:532.6px;font-size:9.8px;letter-spacing:0px;color:#dcdcdc">&lt;Path&gt;</div>
<svg style="left:778.8px;top:533.6px" width="13" height="9"><path d="M0.3 4.5 C2.8 0.2, 9.2 0.2, 11.7 4.5 C9.2 8.8, 2.8 8.8, 0.3 4.5Z" fill="#d2d2d2"/><circle cx="6" cy="4.5" r="2.1" fill="#5e5e5e"/><circle cx="6.4" cy="4.3" r="0.9" fill="#d8d8d8"/></svg>
<div class="a" style="left:815.5px;top:529.6px;width:3px;height:18.1px;background:#4a7de6"></div>
<svg style="left:863px;top:531.1px" width="17" height="16"><rect x="0.6" y="0.6" width="15.4" height="14.8" fill="#fdfdfd" stroke="#111" stroke-width="1.2"/><path d="M1 4 L15 11" stroke="#b4b4b4" stroke-width="1.8"/></svg>
<div class="a" style="left:795px;top:445.5px;width:108px;height:11px;border-radius:12px 0 0 0;background:linear-gradient(180deg,rgba(18,18,18,1) 0,rgba(25,25,25,0.9) 25%,rgba(45,45,45,0.55) 55%,rgba(83,83,83,0) 100%);-webkit-mask-image:linear-gradient(90deg,#000 0,#000 75%,transparent 100%)"></div>
<div class="a" style="left:862.5px;top:446.0px;width:16px;height:5px;background:#9a9a9a;border:1px solid #1a1a1a;border-top:none"></div>
<div class="a" style="left:795px;top:541.7px;width:108px;height:11px;border-radius:12px 0 0 0;background:linear-gradient(180deg,rgba(18,18,18,1) 0,rgba(25,25,25,0.9) 25%,rgba(45,45,45,0.55) 55%,rgba(83,83,83,0) 100%);-webkit-mask-image:linear-gradient(90deg,#000 0,#000 75%,transparent 100%)"></div>
<div class="a" style="left:862.5px;top:542.2px;width:16px;height:5px;background:#9a9a9a;border:1px solid #1a1a1a;border-top:none"></div>
<div class="a" style="left:770px;top:550px;width:224px;height:15px;background:#535353"></div>
<!-- DIALOG -->
<div class="a" style="left:606px;top:149px;width:287px;height:201px;border-radius:6px 6px 4px 4px;box-shadow:0 2px 9px 3px rgba(0,0,0,0.45);background:linear-gradient(180deg,#e4edf7 0,#cfdeef 12px,#c4d6ea 24px,#bcd1e8 100%);border:1px solid #3b3f45"></div>
<div class="a" style="left:607px;top:150px;width:285px;height:24px;border-radius:5px 5px 0 0;background:linear-gradient(100deg,rgba(255,255,255,0.0) 0,rgba(255,255,255,0.35) 35%,rgba(255,255,255,0.0) 55%,rgba(255,255,255,0.3) 75%,rgba(255,255,255,0) 100%)"></div>
<div class="t" style="left:613.5px;top:154.5px;font-size:11.7px;color:#1b1e2c;-webkit-text-stroke:0.1px #1b1e2c">Offset Path</div>
<div class="a" style="left:611px;top:174px;width:277px;height:170px;background:#f2f6fa"></div>
<div class="a" style="left:612px;top:175px;width:275px;height:168px;background:#535353"></div>
<div class="t" style="left:647px;top:199px;font-size:11px;color:#cfcfcf">Offset:</div>
<div class="a" style="left:682px;top:197px;width:90px;height:18px;background:#fff;border:1px solid #4a8ad8"></div>
<div class="a" style="left:684px;top:199px;width:32px;height:14px;background:#3390ff"></div>
<div class="t" style="left:685px;top:199px;font-size:11px;color:#ffffff">40 px</div>
<div class="t" style="left:652px;top:228px;font-size:10.5px;color:#cfcfcf">Joins:</div>
<div class="a" style="left:684px;top:225px;width:87px;height:17px;background:#474747;border-radius:2px"></div>
<div class="t" style="left:689px;top:228px;font-size:11px;color:#ececec">Miter</div>
<svg style="left:758px;top:231px" width="10" height="7"><path d="M1.5 1.5 L4.5 4.5 L7.5 1.5" fill="none" stroke="#e0e0e0" stroke-width="1.6"/></svg>
<div class="t" style="left:628px;top:256px;font-size:11px;color:#cfcfcf">Miter limit:</div>
<div class="a" style="left:684px;top:253.5px;width:87px;height:17px;background:#474747;border-radius:2px"></div>
<div class="t" style="left:687px;top:256px;font-size:11px;color:#ececec">4</div>
<div class="a" style="left:628px;top:297.5px;width:11px;height:11px;background:#d2d2d2;border-radius:1px"></div>
<svg style="left:628px;top:297.5px" width="11" height="11"><path d="M2.2 5.6 L4.6 8 L8.8 3" fill="none" stroke="#4a4a4a" stroke-width="1.6"/></svg>
<div class="t" style="left:643px;top:296.5px;font-size:11px;color:#e0e0e0">Preview</div>
<div class="a" style="left:700px;top:292.5px;width:84px;height:23px;border:2px solid #f4f4f4;border-radius:12px"></div>
<div class="t" style="left:734px;top:297.5px;font-size:10.5px;color:#f0f0f0">OK</div>
<div class="a" style="left:788px;top:292.5px;width:85px;height:23px;border:1.5px solid #e2e2e2;border-radius:12px"></div>
<div class="t" style="left:814px;top:297.5px;font-size:10.5px;color:#e8e8e8">Cancel</div>
</body></html>
